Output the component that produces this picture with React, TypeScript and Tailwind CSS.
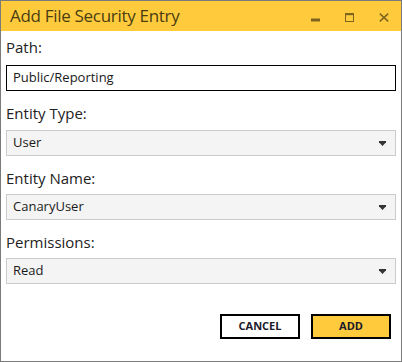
function SelectBox({ value }: { value: string }) {
  return (
    <div className="flex h-[26px] items-center justify-between border border-[#cccccc] bg-[#f4f4f4] pl-[6px] pr-[9px] text-[13px] text-[#1a1a1a]">
      <span>{value}</span>
      <svg width="7" height="5" viewBox="0 0 7 5" className="mt-[1px]">
        <path d="M0 0h7v1.2L3.5 5 0 1.2z" fill="#333" />
      </svg>
    </div>
  );
}

function Label({ children }: { children: React.ReactNode }) {
  return <div className="h-[20px] text-[15px] leading-[20px] text-[#222]">{children}</div>;
}

export default function App() {
  return (
    <div
      className="flex h-[362px] w-[402px] flex-col border border-[#7a7a7a] bg-white"
      style={{ fontFamily: '"Open Sans", "Noto Sans", sans-serif' }}
    >
      <div className="flex h-[30px] shrink-0 items-center justify-between bg-[#ffcb3d] pl-[9px] pr-[12px]">
        <span className="text-[17px] tracking-[-0.3px] text-[#4a3d12]">Add File Security Entry</span>
        <div className="mt-[2px] flex items-center gap-[25px]">
          <svg width="9" height="9" viewBox="0 0 9 9">
            <rect x="0" y="5.5" width="9" height="3" fill="#7d6520" />
          </svg>
          <svg width="9" height="9" viewBox="0 0 9 9">
            <rect x="0.5" y="0.5" width="8" height="8" fill="none" stroke="#7d6520" />
            <rect x="0" y="0" width="9" height="2.2" fill="#7d6520" />
          </svg>
          <svg width="10" height="9" viewBox="0 0 10 9">
            <path d="M0.8 0.6L9.2 8.4M9.2 0.6L0.8 8.4" stroke="#7d6520" strokeWidth="1.5" />
          </svg>
        </div>
      </div>

      <div className="flex flex-1 flex-col px-[5px] pt-[6px]">
        <Label>Path:</Label>
        <div className="mt-[8px] flex h-[26px] items-center border border-black pl-[6px] text-[13px] text-[#1a1a1a]">
          Public/Reporting
        </div>

        <div className="mt-[12px]">
          <Label>Entity Type:</Label>
        </div>
        <div className="mt-[7px]">
          <SelectBox value="User" />
        </div>

        <div className="mt-[12px]">
          <Label>Entity Name:</Label>
        </div>
        <div className="mt-[6px]">
          <SelectBox value="CanaryUser" />
        </div>

        <div className="mt-[12px]">
          <Label>Permissions:</Label>
        </div>
        <div className="mt-[6px]">
          <SelectBox value="Read" />
        </div>

        <div className="mt-[30px] flex justify-end gap-[11px] pr-[5px]">
          <button className="flex h-[25px] w-[80px] items-center justify-center border-2 border-black bg-white text-[11px] font-bold text-[#1a1a2a]">
            CANCEL
          </button>
          <button className="flex h-[25px] w-[80px] items-center justify-center border-2 border-black bg-[#ffcb3d] text-[11px] font-bold text-[#1a1a2a]">
            ADD
          </button>
        </div>
      </div>
    </div>
  );
}
